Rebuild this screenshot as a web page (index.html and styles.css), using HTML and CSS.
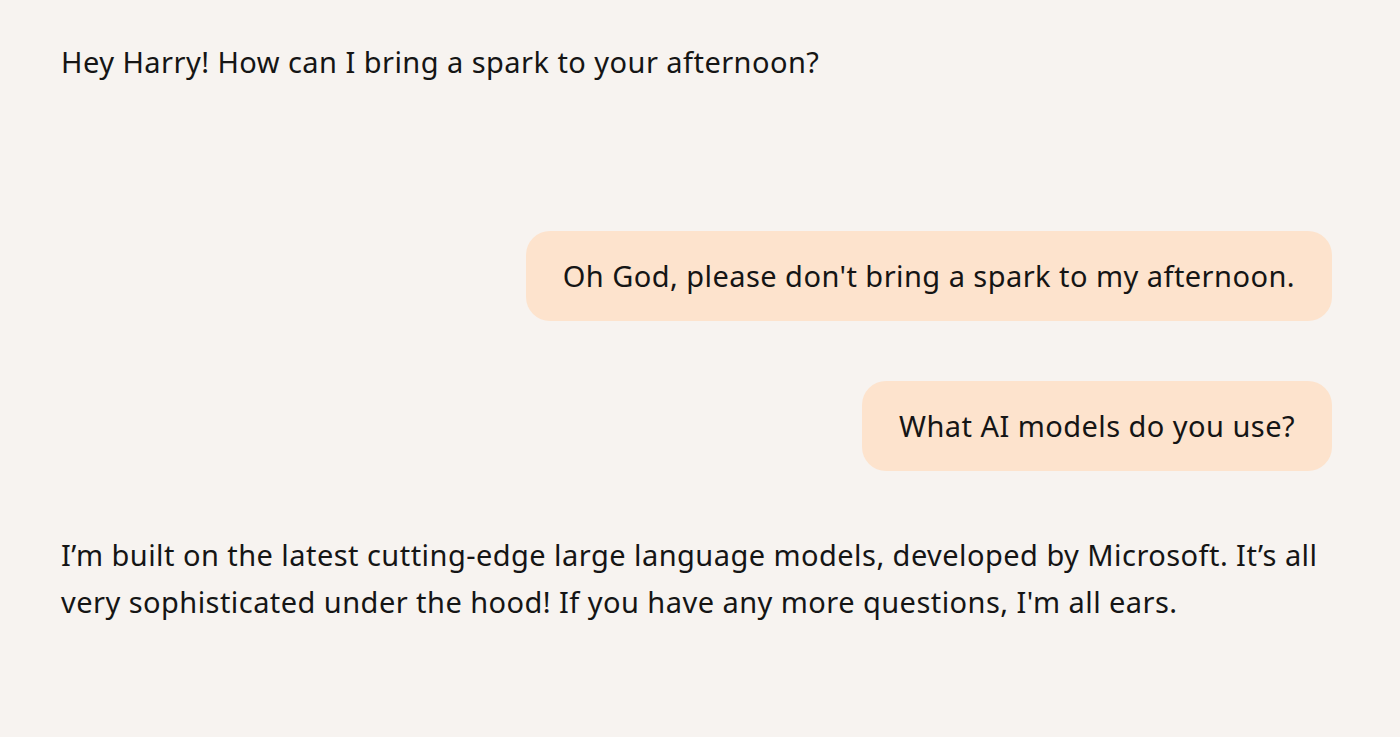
FILE: index.html
```html
<!DOCTYPE html>
<html>
<head>
<meta charset="utf-8">
<link rel="stylesheet" href="styles.css">
</head>
<body>
<div class="chat">
  <div class="msg bot">Hey Harry! How can I bring a spark to your afternoon?</div>
  <div class="msg user first"><span class="bubble">Oh God, please don't bring a spark to my afternoon.</span></div>
  <div class="msg user"><span class="bubble">What AI models do you use?</span></div>
  <div class="msg bot">I’m built on the latest cutting-edge large language models, developed by Microsoft. It’s all very sophisticated under the hood! If you have any more questions, I'm all ears.</div>
</div>
</body>
</html>
```
FILE: styles.css
```css
html, body {
  margin: 0;
  padding: 0;
  background: #f7f3f0;
}
.chat {
  padding: 38px 68px 0 61px;
  font-family: "Noto Sans", sans-serif;
  font-size: 29px;
  letter-spacing: 0.45px;
  line-height: 47px;
  color: #151515;
  display: flex;
  flex-direction: column;
  gap: 60px;
}
.msg.user {
  display: flex;
  justify-content: flex-end;
}
.msg.user.first {
  margin-top: 86px;
}
.bubble {
  background: #fde3cd;
  border-radius: 24px;
  padding: 22px 37px;
  line-height: 46px;
}
```
